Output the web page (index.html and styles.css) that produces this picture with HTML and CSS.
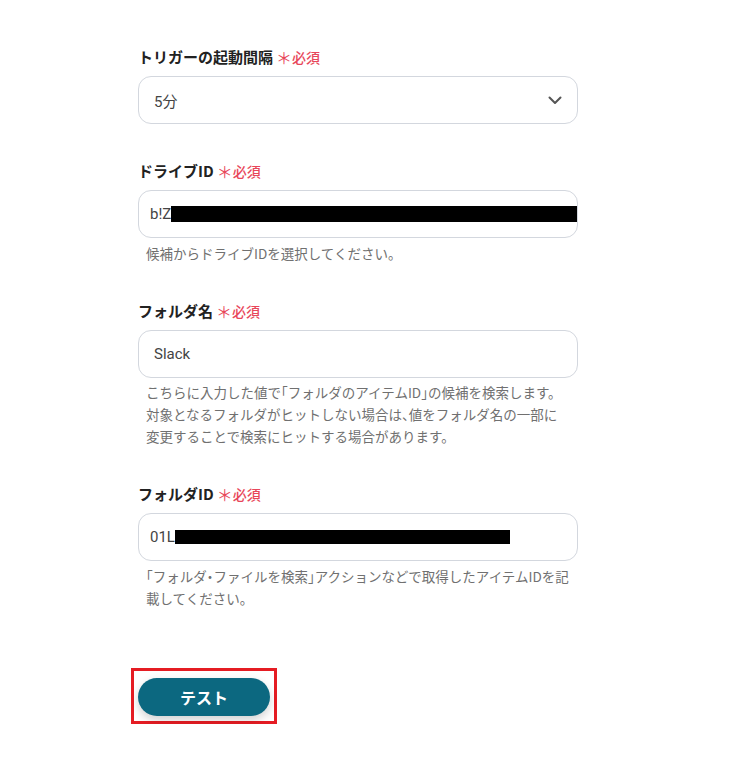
FILE: index.html
```html
<!DOCTYPE html>
<html lang="ja">
<head>
<meta charset="utf-8">
<title>Form</title>
<link rel="stylesheet" href="styles.css">
</head>
<body>
<main class="form">
  <section class="field">
    <div class="label">トリガーの起動間隔<span class="req"><span class="ast">＊</span>必須</span></div>
    <div class="box select">
      <span class="value">5分</span>
      <svg class="chev" width="14" height="9" viewBox="0 0 14 9"><path d="M1.5 1.5 L7 7 L12.5 1.5" fill="none" stroke="#555" stroke-width="2" stroke-linecap="round" stroke-linejoin="round"/></svg>
    </div>
  </section>

  <section class="field">
    <div class="label">ドライブID<span class="req"><span class="ast">＊</span>必須</span></div>
    <div class="box id"><span class="value">b!Z</span><span class="redact r1"></span></div>
    <p class="help">候補からドライブIDを選択してください。</p>
  </section>

  <section class="field">
    <div class="label">フォルダ名<span class="req"><span class="ast">＊</span>必須</span></div>
    <div class="box"><span class="value">Slack</span></div>
    <p class="help help-tight">こちらに入力した値で「フォルダのアイテムID」の候補を検索します。<br>対象となるフォルダがヒットしない場合は、値をフォルダ名の一部に<br>変更することで検索にヒットする場合があります。</p>
  </section>

  <section class="field">
    <div class="label">フォルダID<span class="req"><span class="ast">＊</span>必須</span></div>
    <div class="box id"><span class="value">01L</span><span class="redact r2"></span></div>
    <p class="help">「フォルダ・ファイルを検索」アクションなどで取得したアイテムIDを記<br>載してください。</p>
  </section>

  <div class="action">
    <button class="btn" type="button">テスト</button>
  </div>
</main>
</body>
</html>
```

FILE: styles.css
```css
* { box-sizing: border-box; }
html, body { margin: 0; padding: 0; background: #fff; }
body {
  font-family: Roboto, "Noto Sans CJK JP", "Noto Sans", sans-serif;
  color: #333;
}
.form {
  width: 440px;
  margin-left: 138px;
  padding-top: 47px;
  display: flex;
  flex-direction: column;
  gap: 37px;
}
.field { display: flex; flex-direction: column; }
.label {
  font-family: "Noto Sans CJK JP", sans-serif;
  font-size: 15px;
  font-weight: 700;
  line-height: 20px;
  color: #222;
  margin-bottom: 9px;
  display: flex;
  align-items: center;
}
.req {
  font-size: 14px;
  font-weight: 500;
  color: #e8475a;
  display: inline-flex;
  align-items: center;
  margin-left: 3px;
}
.ast { font-size: 16px; font-weight: 400; margin-right: 0; }
.box {
  height: 48px;
  border: 1px solid #d3d7de;
  border-radius: 13px;
  display: flex;
  align-items: center;
  padding: 0 15px;
  overflow: hidden;
  font-size: 15px;
  color: #444;
  white-space: nowrap;
}
.box.id { padding-left: 11px; }
.select { justify-content: space-between; padding-right: 15px; }
.chev { display: block; }
.redact {
  display: inline-block;
  height: 16px;
  background: #000;
  flex-shrink: 0;
}
.r1 { width: 410px; }
.r2 { width: 335px; height: 14px; }
.help {
  margin: 4px 0 0;
  padding: 0 0 0 8px;
  font-family: "Noto Sans CJK JP", sans-serif;
  font-size: 13.5px;
  font-feature-settings: "halt";
  line-height: 22px;
  color: #707070;
  white-space: nowrap;
}
.help-tight { margin-top: 3px; }
.action {
  align-self: flex-start;
  margin-top: 22px;
  margin-left: -7px;
  border: 3px solid #e51c23;
  padding: 7px 4px 5px 4px;
}
.btn {
  display: block;
  width: 132px;
  height: 38px;
  border: 0;
  border-radius: 19px;
  background: #0c6880;
  color: #fff;
  font-family: "Noto Sans CJK JP", sans-serif;
  font-size: 16px;
  font-weight: 700;
  box-shadow: 0 4px 10px rgba(0, 0, 0, 0.18);
  cursor: pointer;
}
```
